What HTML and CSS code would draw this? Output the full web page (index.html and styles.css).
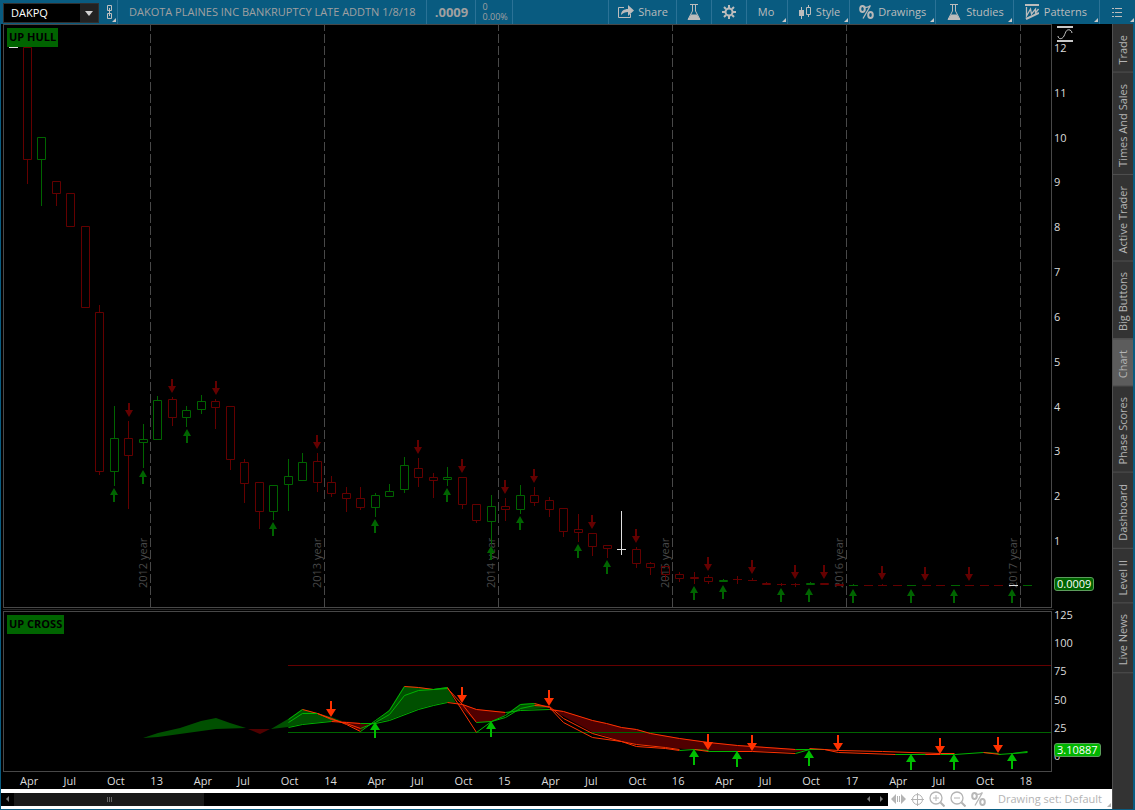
FILE: index.html
```
<!DOCTYPE html>
<html lang="en">
<head>
    <meta charset="UTF-8">
    <meta name="viewport" content="width=device-width, initial-scale=1.0">
    <title>DAKPQ - Chart</title>
    <link rel="stylesheet" href="styles.css">
</head>
<body>
    <header class="toolbar">
        <div class="symbol">
            <input type="text" class="symbol-input" aria-label="Symbol" value="DAKPQ">
            <button class="symbol-toggle" aria-label="Recent symbols"><svg width="8" height="5"><path d="M0 0h8l-4 5z" fill="#d0d0d0"/></svg></button>
        </div>
        <button class="tool tool-link has-menu" aria-label="Link symbol">
            <svg width="7" height="14" fill="none" stroke="#c0c0c0"><path d="M3 5.500H1.500v-5h4v5H4M3 8.500H1.500v5h4v-5H4M3.500 3v8"/></svg>
        </button>
        <div class="cell company">DAKOTA PLAINES INC BANKRUPTCY LATE ADDTN 1/8/18</div>
        <div class="cell last">.0009</div>
        <div class="cell change"><span>0</span><span>0.00%</span></div>
        <div class="spacer"></div>
        <button class="tool tool-share">
            <svg width="16" height="14" fill="none" stroke="#bcbcbc"><path d="M6 2.500H.5v10h12V9"/><path d="M3 10c0-4 3-6 7-6V0l6 5.500-6 5.500V7C7 7 5 8 3 10z" fill="#bcbcbc" stroke="none"/></svg>
            Share
        </button>
        <button class="tool tool-icon" aria-label="Quick study">
            <svg width="14" height="17"><use href="#flask"/></svg>
        </button>
        <button class="tool tool-icon" aria-label="Chart settings">
            <svg width="14" height="14" fill="none" stroke="#bcbcbc"><circle cx="7" cy="7" r="3.500" stroke-width="2"/><path d="M7 0v3M7 11v3M0 7h3M11 7h3M2 2l2 2M10 10l2 2M12 2l-2 2M4 10l-2 2" stroke-width="2"/></svg>
        </button>
        <button class="tool tool-period has-menu">Mo</button>
        <button class="tool has-menu">
            <svg width="12" height="14" fill="none" stroke="#bcbcbc"><path d="M2.500 2v12M9.500 0v3M9.500 9v3"/><path d="M0 5h5v6H0z" fill="#bcbcbc" stroke="none"/><path d="M7.500 2.500h4v7h-4z"/></svg>
            Style
        </button>
        <button class="tool tool-drawings has-menu">
            <svg width="15" height="14"><use href="#percent"/></svg>
            Drawings
        </button>
        <button class="tool has-menu">
            <svg width="14" height="17"><use href="#flask"/></svg>
            Studies
        </button>
        <button class="tool tool-patterns has-menu">
            <svg width="14" height="16" fill="none" stroke="#bcbcbc"><path d="M0 1h14M1 15L14 9" stroke-width="2"/><path d="M1.500 3v9l4-7 1 5 4-5v4l3-4" stroke-width="1.300"/></svg>
            Patterns
        </button>
        <button class="tool tool-list has-menu" aria-label="Menu">
            <svg width="10" height="11" stroke="#bcbcbc"><path d="M0 1.500h2M3 1.500h7M0 5.500h2M3 5.500h7M0 9.500h2M3 9.500h7"/></svg>
        </button>
    </header>

    <main class="workspace">
        <section class="chart">
            <div class="panel">
                <span class="study-label">UP HULL</span>
                <svg class="plot" id="pricePlot" viewBox="4 25 1047 582" preserveAspectRatio="none"></svg>
            </div>
            <div class="axis price-axis">
                <svg class="scale-icon" width="16" height="16" fill="none" stroke="#c8c8c8"><path d="M0 1h16M0 15h16" stroke-width="2"/><path d="M1 10c0 3 4 4 6 0s2-7 6-6q2 1 2 3"/></svg>
                <span>12</span><span>11</span><span>10</span><span>9</span><span>8</span><span>7</span><span>6</span><span>5</span><span>4</span><span>3</span><span>2</span><span>1</span>
                <output class="bubble bubble-price">0.0009</output>
            </div>

            <div class="splitter"></div>

            <div class="panel">
                <span class="study-label">UP CROSS</span>
                <svg class="plot" id="studyPlot" viewBox="4 612 1047 159" preserveAspectRatio="none"></svg>
            </div>
            <div class="axis study-axis">
                <span>125</span><span>100</span><span>75</span><span>50</span><span>25</span><span>0</span>
                <output class="bubble bubble-study">3.10887</output>
            </div>

            <div class="time-axis">
                <span>Apr</span><span>Jul</span><span>Oct</span><span>13</span>
                <span>Apr</span><span>Jul</span><span>Oct</span><span>14</span>
                <span>Apr</span><span>Jul</span><span>Oct</span><span>15</span>
                <span>Apr</span><span>Jul</span><span>Oct</span><span>16</span>
                <span>Apr</span><span>Jul</span><span>Oct</span><span>17</span>
                <span>Apr</span><span>Jul</span><span>Oct</span><span>18</span>
            </div>

            <footer class="bottom-bar">
                <div class="scroll">
                    <button class="scroll-btn" aria-label="Scroll left"><svg width="3" height="6"><path d="M3 0v6L0 3z" fill="#777"/></svg></button>
                    <div class="thumb"><svg width="5" height="5" stroke="#666"><path d="M.5 0v5M2.500 0v5M4.500 0v5"/></svg></div>
                    <button class="scroll-btn scroll-back" aria-label="Step left"><svg width="3" height="6"><path d="M3 0v6L0 3z" fill="#777"/></svg></button>
                    <button class="scroll-btn" aria-label="Step right"><svg width="3" height="6"><path d="M0 0v6l3-3z" fill="#777"/></svg></button>
                </div>
                <button class="mini" aria-label="Pan"><svg width="15" height="10" fill="#b4b4b4"><path d="M5 0v10L0 5zM10 0v10l5-5zM6 2h1v6H6zM8 2h1v6H8z"/></svg></button>
                <button class="mini" aria-label="Crosshair"><svg width="13" height="13" fill="none" stroke="#b4b4b4"><circle cx="6.500" cy="6.500" r="5"/><path d="M6.500 0v13M0 6.500h13"/></svg></button>
                <button class="mini" aria-label="Zoom in"><svg width="16" height="16" fill="none" stroke="#b4b4b4"><circle cx="7" cy="7" r="6" stroke-width="1.300"/><path d="M11.500 11.500L15.500 15.500" stroke-width="2"/><path d="M4 7h6M7 4v6"/></svg></button>
                <button class="mini" aria-label="Zoom out"><svg width="16" height="16" fill="none" stroke="#b4b4b4"><circle cx="7" cy="7" r="6" stroke-width="1.300"/><path d="M11.500 11.500L15.500 15.500" stroke-width="2"/><path d="M4 7h6"/></svg></button>
                <button class="mini" aria-label="Drawing tools"><svg width="15" height="14"><use href="#percent"/></svg></button>
                <button class="drawing-set has-menu">Drawing set: Default</button>
            </footer>
        </section>

        <nav class="side-tabs">
            <button>Trade</button>
            <button>Times And Sales</button>
            <button>Active Trader</button>
            <button>Big Buttons</button>
            <button class="active">Chart</button>
            <button>Phase Scores</button>
            <button>Dashboard</button>
            <button>Level II</button>
            <button>Live News</button>
        </nav>
    </main>

    <svg class="defs" width="0" height="0" aria-hidden="true">
        <symbol id="flask" viewBox="0 0 14 17">
            <path d="M3 .5h8M5.500 1v6L1 15.500h12L8.500 7V1" fill="none" stroke="#bcbcbc"/>
            <path d="M4 10.500h6l3 5H1z" fill="#bcbcbc"/>
        </symbol>
        <symbol id="percent" viewBox="0 0 15 14">
            <g fill="none" stroke="#b8b8b8">
                <ellipse cx="3.500" cy="4" rx="2.300" ry="3" stroke-width="2"/>
                <ellipse cx="11.500" cy="10" rx="2.300" ry="3" stroke-width="2"/>
                <path d="M11.500 .5L4 13.500M4 1.500q4 2 7.500 -1" stroke-width="1.300"/>
            </g>
        </symbol>
    </svg>
    <script src="chart.js"></script>
</body>
</html>
```
FILE: styles.css
```
* {
    box-sizing: border-box;
}
body {
    margin: 0;
    height: 100vh;
    display: flex;
    flex-direction: column;
    background-color: #095b80;
    font-family: "Open Sans", "Noto Sans", sans-serif;
    font-size: 11px;
    line-height: 16px;
    color: #dcdcdc;
    overflow: hidden;
}
button, input {
    font: inherit;
    color: inherit;
    border: 0;
    padding: 0;
    margin: 0;
    background: none;
}
svg {
    display: block;
    flex: none;
}
.defs {
    position: absolute;
}

/* toolbar */
.toolbar {
    display: flex;
    flex: none;
    height: 24px;
    padding-left: 3px;
    color: #bcbcbc;
}
.symbol {
    display: flex;
    width: 96px;
    height: 20px;
    margin-top: 3px;
    background-color: #000;
    border: 1px solid #303030;
}
.symbol-input {
    flex: 1;
    min-width: 0;
    padding-left: 7px;
    color: #fff;
}
.symbol-toggle {
    display: flex;
    align-items: center;
    justify-content: center;
    width: 18px;
    background-color: #222;
}
.tool, .cell {
    display: flex;
    align-items: center;
    position: relative;
    border-right: 1px solid #2b7296;
    white-space: nowrap;
}
.tool {
    gap: 5px;
}
.tool.has-menu {
    padding: 0 9px 0 11px;
}
.has-menu::after {
    content: "";
    position: absolute;
    right: 1px;
    bottom: 2px;
    border-left: 4px solid transparent;
    border-bottom: 4px solid #c8c8c8;
}
.tool.tool-link {
    width: 19px;
    padding: 0 0 0 7px;
}
.tool-share {
    gap: 4px;
    padding: 0 8px 0 9px;
}
.tool-icon {
    width: 35px;
    justify-content: center;
}
.tool-period {
    width: 41px;
}
.tool.tool-drawings {
    gap: 4px;
    padding-left: 9px;
}
.tool.tool-patterns {
    padding-right: 12px;
}
.tool.tool-list {
    width: 35px;
    padding-left: 12px;
    border: 0;
}
.cell {
    color: #a0a0a0;
}
.company {
    padding: 0 11px;
}
.last {
    width: 49px;
    justify-content: center;
    font-size: 13px;
    font-weight: bold;
}
.change {
    width: 37px;
    padding-left: 6px;
    flex-direction: column;
    align-items: flex-start;
    justify-content: center;
    font-size: 9px;
    line-height: 10px;
}
.spacer {
    flex: 1;
    border-right: 1px solid #2b7296;
}

/* chart area */
.workspace {
    flex: 1;
    min-height: 0;
    display: flex;
    border: solid #095b80;
    border-width: 0 2px 1px 1px;
}
.chart {
    flex: 1;
    min-width: 0;
    display: grid;
    grid-template-columns: 1fr 60px;
    grid-template-rows: 1fr 3px 161px 17px 20px;
    background-color: #000;
}
.panel {
    position: relative;
    min-height: 0;
    margin-left: 2px;
    border: 1px solid #484848;
}
.plot {
    width: 100%;
    height: 100%;
}
.study-label {
    position: absolute;
    left: 3px;
    top: 3px;
    padding: 0 2px 2px;
    line-height: 17px;
    font-weight: bold;
    color: #000;
    background-color: #006400;
}
.splitter {
    grid-column: 1 / -1;
    width: calc(100% - 60px);
    margin-left: 2px;
    border-top: 1px solid #000;
    background: linear-gradient(#262626 1px, #000 1px);
}
.axis {
    position: relative;
    display: flex;
    flex-direction: column;
    justify-content: space-between;
    padding-left: 2px;
}
.price-axis {
    padding-top: 16px;
    padding-bottom: 59px;
}
.study-axis {
    padding-bottom: 8px;
    margin-top: -4px;
}
.scale-icon {
    position: absolute;
    left: 5px;
    top: 2px;
}
.bubble {
    position: absolute;
    left: 2px;
    padding: 0 2px;
    line-height: 12px;
    color: #fff;
    border: 1px solid #5c9c5c;
    border-radius: 3px;
}
.bubble-price {
    bottom: 17px;
    background-color: #006400;
}
.bubble-study {
    bottom: 15px;
    background-color: #00b400;
}
.time-axis {
    grid-column: 1 / -1;
    display: grid;
    grid-template-columns: repeat(24, 1fr);
    padding: 1px 49px 0 19px;
}

/* line drawing */
.grid-line {
    stroke: #484848;
    stroke-dasharray: 9 3;
    stroke-dashoffset: 3;
}
.year {
    fill: #484848;
}
.candle {
    fill: none;
}
.r {
    stroke: #640000;
}
.g {
    stroke: #006400;
}
.w {
    stroke: #e0e0e0;
}
.mark-up {
    fill: #006400;
}
.mark-down {
    fill: #640000;
}
.cross-up {
    fill: #00be00;
}
.cross-down {
    fill: #ff3200;
}
.cloud-up {
    fill: #005000;
}
.cloud-down {
    fill: #500000;
}
.line-up, .line-down {
    fill: none;
    stroke: #00b400;
}
.line-down {
    stroke: #ff3200;
}

/* bottom bar */
.bottom-bar {
    grid-column: 1 / -1;
    display: flex;
    align-items: center;
    gap: 5px;
    background-color: #fff;
    color: #b4b4b4;
}
.scroll {
    flex: 1;
    display: flex;
    align-items: center;
    height: 13px;
    margin-right: -2px;
    background-color: #000;
}
.scroll-btn {
    display: flex;
    align-items: center;
    justify-content: center;
    width: 13px;
    height: 13px;
}
.scroll-back {
    margin-left: auto;
}
.thumb {
    display: flex;
    align-items: center;
    justify-content: center;
    width: 190px;
    height: 13px;
    background-color: #1a1a1a;
}
.drawing-set {
    position: relative;
    padding: 0 10px 0 7px;
    line-height: 20px;
}
.drawing-set::after {
    border-bottom-color: #b4b4b4;
}

/* side tabs */
.side-tabs {
    display: flex;
    flex-direction: column;
    width: 21px;
    background-color: #333;
    border-left: 1px solid #505050;
}
.side-tabs button {
    writing-mode: vertical-rl;
    transform: rotate(180deg);
    width: 20px;
    line-height: 20px;
    padding: 7px 0 11px;
    border-top: 1px solid #505050;
    color: #b4b4b4;
    text-align: center;
}
.side-tabs .active {
    background-color: #5c5c5c;
}
```
FILE: chart.js
```
const pricePlot = document.getElementById('pricePlot');
const studyPlot = document.getElementById('studyPlot');

// [colour, high, body top, body bottom, low], one per month
const candles = [
    ['r', 47, 47, 159, 183], ['g', 137, 137, 159, 205], ['r', 181, 181, 193, 205], ['r', 193, 193, 226, 226],
    ['r', 226, 226, 307, 307], ['r', 305, 312, 471, 474], ['g', 406, 438, 471, 485], ['r', 421, 438, 455, 508],
    ['g', 424, 439, 442, 467], ['g', 396, 400, 439, 439], ['r', 397, 399, 417, 425], ['g', 406, 410, 417, 426],
    ['g', 395, 401, 409, 413], ['r', 399, 401, 407, 428], ['r', 406, 406, 459, 469], ['r', 459, 462, 483, 502],
    ['r', 482, 482, 511, 528], ['g', 485, 485, 511, 519], ['g', 459, 476, 484, 510], ['g', 453, 462, 480, 480],
    ['r', 453, 461, 482, 491], ['r', 476, 482, 493, 496], ['r', 487, 493, 498, 511], ['r', 487, 498, 507, 509],
    ['g', 493, 495, 507, 516], ['g', 484, 491, 496, 496], ['g', 457, 465, 489, 492], ['r', 458, 468, 477, 486],
    ['r', 473, 477, 480, 497], ['g', 467, 477, 479, 485], ['r', 477, 477, 504, 508], ['r', 504, 504, 520, 522],
    ['g', 495, 506, 521, 543], ['r', 498, 506, 509, 520], ['g', 485, 495, 509, 513], ['r', 487, 495, 502, 505],
    ['r', 497, 500, 509, 516], ['r', 508, 508, 531, 536], ['r', 514, 529, 532, 541], ['r', 533, 533, 546, 555],
    ['r', 545, 545, 548, 557], ['w', 511, 549, 549, 554], ['r', 547, 549, 563, 567], ['r', 562, 563, 567, 574],
    ['r', 566, 566, 574, 579], ['r', 572, 574, 578, 581], ['r', 572, 577, 578, 583], ['r', 575, 577, 581, 583],
    ['g', 579, 580, 581, 581], ['r', 576, 579, 579, 583], ['r', 578, 580, 580, 580], ['r', 582, 583, 584, 584],
    ['r', 583, 584, 584, 585], ['r', 583, 584, 584, 586], ['g', 582, 583, 584, 584], ['r', 583, 583, 584, 584],
    ['r', 584, 584, 585, 585], ['g', 584, 585, 585, 585], ['r', 585, 585, 585, 585], ['r', 584, 585, 585, 585],
    ['r', 585, 585, 585, 585], ['g', 585, 585, 585, 585], ['r', 585, 585, 585, 585], ['r', 585, 585, 585, 585],
    ['g', 585, 585, 585, 585], ['r', 585, 585, 585, 585], ['r', 585, 585, 585, 585], ['r', 585, 585, 585, 585],
    ['w', 585, 585, 585, 585], ['g', 585, 585, 585, 585]
];

// arrows: [x, y of the top]
const hullDown = [[129, 403], [172, 379], [216, 381], [317, 435], [418, 440], [462, 459], [505, 480], [534, 469],
    [592, 515], [636, 529], [708, 557], [752, 560], [795, 565], [824, 565], [882, 566], [925, 567], [969, 567]];
const hullUp = [[114, 488], [143, 470], [187, 429], [273, 522], [375, 519], [447, 488], [491, 546], [520, 516],
    [578, 544], [607, 560], [694, 586], [723, 585], [781, 588], [809, 588], [853, 589], [911, 589], [954, 589], [1012, 589]];
const crossDown = [[331, 701], [462, 687], [549, 690], [708, 734], [752, 735], [838, 735], [940, 738], [998, 737]];
const crossUp = [[375, 722], [491, 721], [694, 749], [737, 751], [809, 750], [911, 754], [954, 754], [1012, 753]];

const clouds = [
    ['up', '143,738 158,733 180,728 201,721 216,718 230,723 246,728 216,729 187,733 158,737'],
    ['down', '248,729 260,734 270,729'],
    ['up', '271,729 288,719 302,709 317,713 331,717 342,721 331,721 302,724 288,727'],
    ['down', '342,721 360,731 371,723 360,723'],
    ['up', '375,722 389,710 404,686 418,687 433,689 447,687 456,703 447,702 433,705 418,709 389,720'],
    ['down', '456,703 476,722 491,722 505,715 505,712 476,709 462,704'],
    ['up', '505,715 520,704 534,703 549,708 534,709 520,710'],
    ['down', '549,708 563,716 592,732 621,741 636,744 665,747 694,750 795,752 809,750 795,749 737,745 708,742 679,738 650,733 636,729 621,727 606,723 592,720 563,711']
];

const lines = [
    ['up', '288,719 302,709'],
    ['down', '302,709 317,713 331,718 346,724 360,731'],
    ['up', '360,731 375,720 389,710 404,686'],
    ['down', '404,686 418,687 433,689'],
    ['up', '433,689 447,687'],
    ['down', '447,687 476,732'],
    ['up', '476,732 491,721 505,715 520,704 534,703'],
    ['down', '534,703 549,707 563,722 592,737 621,741 636,746 665,748 679,750'],
    ['up', '288,722 302,713 317,713'],
    ['down', '317,713 331,719 346,723 360,728'],
    ['up', '360,728 375,722 389,714 404,695 418,690 433,689 447,688'],
    ['down', '447,688 462,704 476,722'],
    ['up', '476,722 491,721 505,717 520,708 534,705'],
    ['down', '534,705 549,706 563,718 592,733 621,741 636,744 665,747 679,749'],
    ['up', '288,727 302,724 331,721'],
    ['down', '331,721 346,722 360,723'],
    ['up', '360,723 375,723 389,720 418,709 433,705 447,702'],
    ['down', '447,702 462,704 476,709 505,712'],
    ['up', '505,712 520,710 549,709'],
    ['down', '549,709 563,711 592,720 606,723 621,727 636,729 650,733 679,738 708,742 737,745 795,749'],
    ['up', '679,750 694,749 708,750'],
    ['down', '694,749 708,751 752,751 795,753'],
    ['up', '708,751 737,751'],
    ['up', '795,753 809,749 824,749 795,749'],
    ['down', '809,748 824,749 838,750 882,751 940,753 954,753'],
    ['down', '824,749 838,752 895,754 940,754'],
    ['up', '895,754 925,754'],
    ['up', '940,754 954,754 983,752 998,753'],
    ['down', '983,752 1000,754'],
    ['up', '998,754 1012,753 1027,751'],
    ['up', '1012,753 1027,752']
];

function arrows(list, dir, name, half, size) {
    // half: half width of the head, size: full height
    const head = half + 3;
    return list.map(([x, y]) => {
        const d = dir === 'up'
            ? `M${x} ${y}l${half} ${head}h${1 - half}v${size - head}h-2v${head - size}h${1 - half}z`
            : `M${x} ${y + size}l${half} ${-head}h${1 - half}v${head - size}h-2v${size - head}h${1 - half}z`;
        return `<path class="${name}-${dir}" d="${d}"/>`;
    }).join('');
}

function renderPrice() {
    let out = '';
    for (let i = 0; i < 6; i++) {
        const x = 150.5 + i * 174;
        out += `<path class="grid-line" d="M${x} 25V607"/>`;
        out += `<text class="year" transform="translate(${x - 4} 588) rotate(-90)">${2012 + i} year</text>`;
    }
    candles.forEach(([color, high, top, bottom, low], i) => {
        const x = Math.floor(27 + i * 14.5) + 0.5;
        let d = `M${x - 4.5} ${top + 0.5}h9`;
        if (bottom > top) {
            d = `M${x - 4} ${top + 0.5}h8V${bottom + 0.5}h-8z`;
        }
        if (high < top) d += `M${x} ${high}V${top}`;
        if (low > bottom) d += `M${x} ${bottom + 1}V${low + 1}`;
        out += `<path class="candle ${color}" d="${d}"/>`;
    });
    out += '<path class="w" d="M9 47.5h9"/>';
    out += arrows(hullDown, 'down', 'mark', 4, 14);
    out += arrows(hullUp, 'up', 'mark', 4, 14);
    pricePlot.innerHTML = out;
}

function renderStudy() {
    let out = clouds.map(([dir, points]) => `<polygon class="cloud-${dir}" points="${points}"/>`).join('');
    out += '<path class="r" d="M288 665.5H1051"/><path class="g" d="M288 732.5H1051"/>';
    out += '<g transform="translate(0.5 0.5)">';
    out += lines.map(([dir, points]) => `<polyline class="line-${dir}" points="${points}"/>`).join('');
    out += '</g>';
    out += arrows(crossDown, 'down', 'cross', 5, 16);
    out += arrows(crossUp, 'up', 'cross', 5, 16);
    studyPlot.innerHTML = out;
}

renderPrice();
renderStudy();
```
